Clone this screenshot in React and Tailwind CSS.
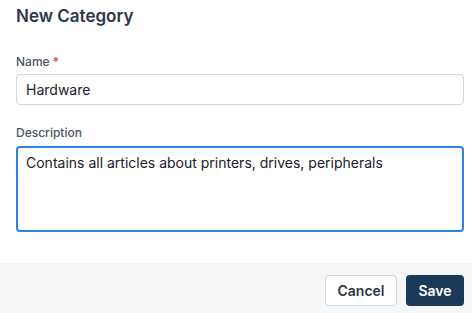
export default function App() {
  return (
    <div
      className="w-[472px] h-[313px] bg-white flex flex-col overflow-hidden"
      style={{ fontFamily: 'Inter, "Liberation Sans", Arial, sans-serif' }}
    >
      <div className="pl-4 pr-2 flex-1">
        <h1 className="text-[17px] leading-[24px] font-semibold text-[#2d3748] pt-[4px]">
          New Category
        </h1>
        <div className="mt-[26px]">
          <label className="block text-[12px] leading-[16px] font-medium text-[#4a5568]">
            Name <span className="text-[#e53e3e]">*</span>
          </label>
          <input
            className="mt-[4px] block w-[448px] h-[31px] rounded-[4px] border border-[#cfd6de] px-[9px] text-[14px] text-[#1a202c] outline-none"
            defaultValue="Hardware"
            readOnly
          />
        </div>
        <div className="mt-[20px]">
          <label className="block text-[12px] leading-[16px] font-medium text-[#4a5568]">
            Description
          </label>
          <textarea
            className="mt-[5px] block w-[448px] h-[86px] rounded-[4px] border-2 border-[#3182e6] px-[8px] py-[5px] text-[14px] leading-[20px] text-[#1a202c] outline-none resize-none"
            defaultValue="Contains all articles about printers, drives, peripherals"
            readOnly
          />
        </div>
      </div>
      <div className="h-[50px] bg-[#f5f6f8] flex items-start justify-end gap-[9px] pr-[8px] pt-[12px]">
        <button className="h-[31px] w-[72px] rounded-[4px] border border-[#d2d8df] bg-white text-[14px] font-semibold text-[#2d3748]">
          Cancel
        </button>
        <button className="h-[31px] w-[58px] rounded-[4px] bg-[#1b3a57] text-[14px] font-semibold text-white">
          Save
        </button>
      </div>
    </div>
  );
}
